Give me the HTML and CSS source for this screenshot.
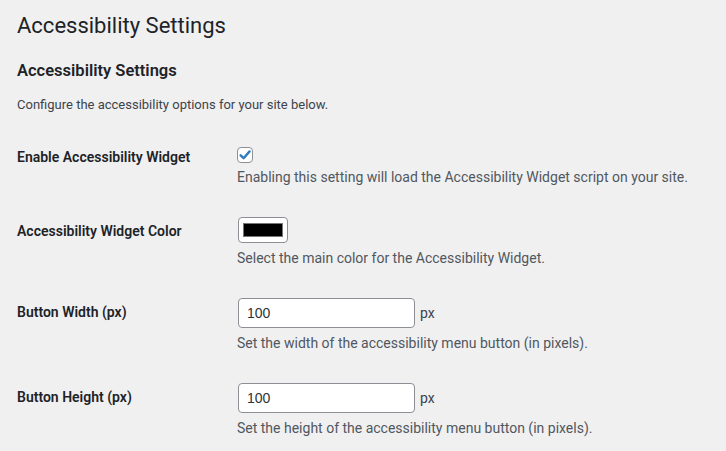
FILE: index.html
```html
<!DOCTYPE html>
<html lang="en">
<head>
    <meta charset="UTF-8">
    <title>Accessibility Settings</title>
    <link rel="stylesheet" href="styles.css">
</head>
<body>
    <div class="wrap">
        <h1 class="page-title">Accessibility Settings</h1>
        <h2 class="section-title">Accessibility Settings</h2>
        <p class="intro">Configure the accessibility options for your site below.</p>

        <table class="form-table">
            <tr>
                <th>Enable Accessibility Widget</th>
                <td>
                    <span class="checkbox">
                        <svg width="16" height="16" viewBox="0 0 16 16">
                            <path d="M3.6 8.3 L6.6 11.2 L12.6 4.4" fill="none" stroke="#2f7cc0" stroke-width="2.4" stroke-linecap="round" stroke-linejoin="round"/>
                        </svg>
                    </span>
                    <p class="description desc-check">Enabling this setting will load the Accessibility Widget script on your site.</p>
                </td>
            </tr>
            <tr>
                <th>Accessibility Widget Color</th>
                <td>
                    <span class="color-input"><span class="swatch"></span></span>
                    <p class="description">Select the main color for the Accessibility Widget.</p>
                </td>
            </tr>
            <tr>
                <th>Button Width (px)</th>
                <td>
                    <div class="field">
                        <input type="text" class="text-input" value="100">
                        <span class="unit">px</span>
                    </div>
                    <p class="description">Set the width of the accessibility menu button (in pixels).</p>
                </td>
            </tr>
            <tr>
                <th>Button Height (px)</th>
                <td>
                    <div class="field">
                        <input type="text" class="text-input" value="100">
                        <span class="unit">px</span>
                    </div>
                    <p class="description">Set the height of the accessibility menu button (in pixels).</p>
                </td>
            </tr>
        </table>
    </div>
</body>
</html>
```
FILE: styles.css
```css
body {
    background-color: #f0f0f1;
    font-family: Roboto, "Liberation Sans", sans-serif;
    color: #3c434a;
    font-size: 13px;
    line-height: 1.5;
    margin: 0;
    padding: 0;
}
.wrap {
    padding: 0 17px;
}
.page-title {
    font-size: 22px;
    font-weight: 400;
    line-height: 30px;
    color: #1d2327;
    margin: 11px 0 0;
}
.section-title {
    font-size: 16.5px;
    font-weight: 600;
    line-height: 22px;
    color: #1d2327;
    margin: 19px 0 0;
}
.intro {
    margin: 13px 0 0;
}
.form-table {
    border-collapse: collapse;
    margin-top: 13px;
}
.form-table th {
    width: 200px;
    padding: 20px 10px 20px 0;
    text-align: left;
    vertical-align: top;
    font-size: 14px;
    font-weight: 600;
    line-height: 1.3;
    color: #1d2327;
}
.form-table td {
    padding: 15px 10px;
    vertical-align: top;
}
.checkbox {
    display: block;
    width: 14px;
    height: 14px;
    margin-top: 4px;
    border: 1px solid #8c8f94;
    border-radius: 4px;
    background: #fff;
    position: relative;
}
.checkbox svg {
    position: absolute;
    left: -1px;
    top: -1px;
}
.description {
    margin: 5.5px 0 0;
    font-size: 14px;
    line-height: 19.5px;
    color: #50575e;
}
.desc-check {
    margin-top: 5px;
}
.color-input {
    display: block;
    box-sizing: border-box;
    width: 50px;
    height: 26px;
    margin-left: 1px;
    padding: 5px 4px;
    border: 1px solid #8c8f94;
    border-radius: 4px;
    background: #fff;
}
.swatch {
    display: block;
    height: 14px;
    background: #000;
    border: 1px solid #767676;
    box-sizing: border-box;
}
.field {
    display: flex;
    align-items: center;
    gap: 5px;
}
.text-input {
    box-sizing: border-box;
    width: 177px;
    height: 30px;
    margin: 0 0 0 1px;
    padding: 0 8px;
    border: 1px solid #8c8f94;
    border-radius: 4px;
    background: #fff;
    font-family: "Liberation Sans", Arial, sans-serif;
    font-size: 14px;
    color: #2c3338;
}
.unit {
    font-size: 14px;
    color: #3c434a;
}
```
